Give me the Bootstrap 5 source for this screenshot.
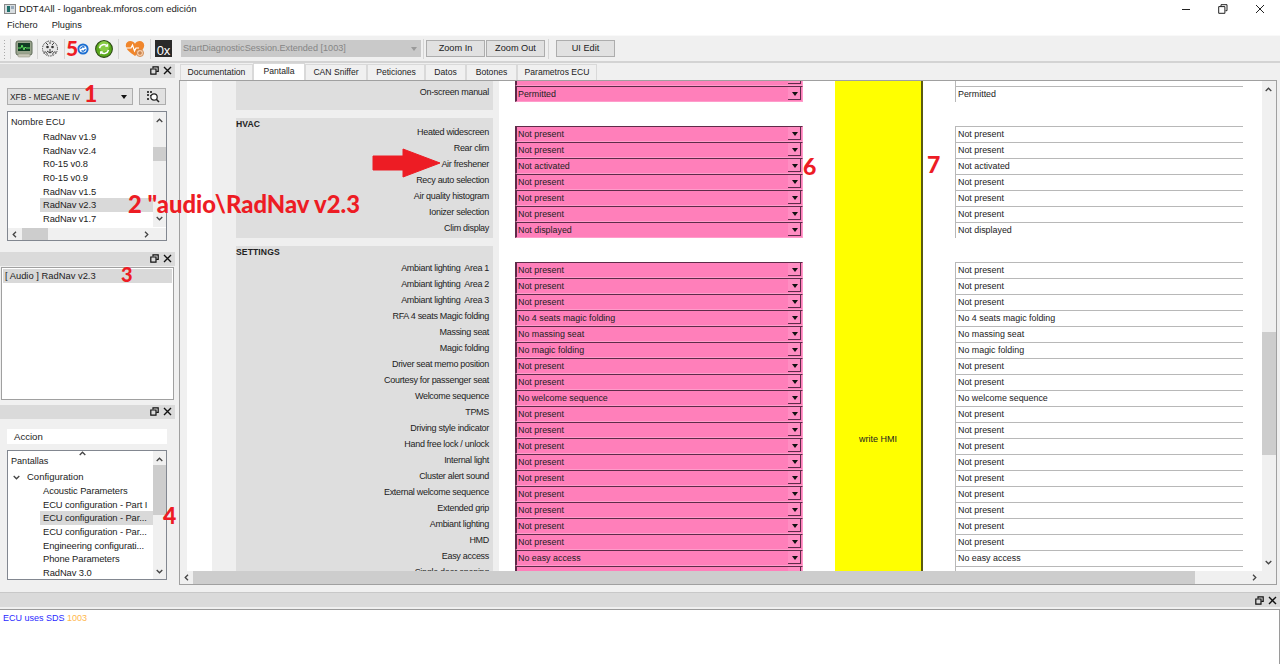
<!DOCTYPE html>
<html lang="es">
<head>
<meta charset="utf-8">
<title>DDT4All</title>
<link href="https://cdn.jsdelivr.net/npm/bootstrap@5.3.0/dist/css/bootstrap.min.css" rel="stylesheet">
<style>
html,body{height:664px;overflow:hidden}
body{font-family:"Liberation Sans",Arial,sans-serif;font-size:9.4px;color:#222;background:#f0f0f0;line-height:1.2;position:relative;width:1280px}
.win-title{height:18px;background:#fff;padding-left:4px;font-size:9.6px;gap:3px}
.win-ctl{margin-left:auto;gap:27px;padding-right:15px}
.win-ctl svg{display:block}
.win-menu{height:17px;background:#fff;padding:0 0 1px 7px;gap:14px;font-size:9.2px}
.tool-strip{height:28px;background:#f0f0f0;border-top:1px solid #f9f9f9;border-bottom:2px solid #d3d3d3;padding-left:3px}
.grip{width:3px;height:20px;margin-right:4px;background-image:radial-gradient(#aaa 40%,transparent 45%);background-size:3px 3px;flex:none}
.tsep{width:1px;height:20px;background:#d5d5d5;flex:none}
.ticon{width:18px;height:18px;flex:none;display:block}
.ti-mon{margin:0 4px}
.ti-skull{margin:0 5px 0 3px}
.ti-blue{margin-left:6px}
.ti-green{margin:0 5px 0 6px}
.ti-heart{width:20px;margin:0 5px 0 6px}
.sep-a{margin-right:4px}
.sep-b{margin:0 2px}
.sep-c{margin:0 7px 0 3px}
.t0x{width:17px;height:17px;background:#2a2a2a;color:#fff;font-size:13px;line-height:21px;text-align:center;flex:none;overflow:hidden}
.sess-combo{width:240px;height:17px;background:#c9c9c9;color:#858585;padding-left:2px;margin-left:9px;font-size:9.1px;line-height:17px;position:relative;flex:none}
.sess-combo::after{content:"";position:absolute;right:4px;top:7px;border:3px solid transparent;border-top:4px solid #9a9a9a}
.tool-btn.btn{--bs-btn-border-radius:0;width:59px;height:17px;padding:0;font-size:9.2px;line-height:15px;background:#e1e1e1;border:1px solid #adadad;color:#222;flex:none}
.btn-next{margin-left:1px}
.main-area{height:527px}
.left-docks{width:175px;flex:none;padding-top:1px}
.dock-title{height:14px;background:#dadada;gap:4px;padding:0 3px 2px 0}
.dock-title svg{display:block}
.dock-one{height:188px}
.dock-two{height:153px}
.dock-three{height:180px}
.ecu-combo{position:absolute;left:7px;top:24px;width:126px;height:17px;background:#e1e1e1;border:1px solid #adadad;padding-left:2px;line-height:16px;font-size:8.5px;letter-spacing:-.1px}
.ecu-combo::after{content:"";position:absolute;right:5px;top:6px;border:3px solid transparent;border-top:4px solid #111}
.scan-btn{position:absolute;left:139px;top:24px;width:27px;height:17px;background:#e1e1e1;border:1px solid #adadad;padding:0 0 0 6px}
.tree-frame{position:absolute;left:7px;width:160px;height:130px;background:#fff;border:1px solid #828790;overflow:hidden}
.frame-ecu{top:47px}
.frame-act{top:45px}
.tree-head{font-size:9.1px;padding-left:3px;height:14px;line-height:14px;margin-top:3px}
.tree-conf{padding-left:5px;gap:7px;margin-top:2px;font-size:9.5px}
.tree-rows{margin:0;padding:0;list-style:none}
.rows-ecu{margin-top:1px}
.rows-act li{letter-spacing:0}
.tree-rows li{height:13.65px;line-height:13.65px;padding-left:35px;width:145px;font-size:9.4px;letter-spacing:-.1px;white-space:nowrap;overflow:hidden}
.tree-rows li.on{background:#d9d9d9;margin-left:32px;padding-left:3px;width:113px}
.vbar{position:absolute;right:0;top:0;width:13px;background:#f0f0f0}
.vbar-ecu{height:115px}
.vbar-act{height:128px}
.vbar i{position:absolute;left:0;width:13px;background:#cdcdcd;display:block}
.th-ecu{top:35px;height:14px}
.th-act{top:14px;height:50px}
.hbar{position:absolute;left:0;bottom:0;height:12px;width:158px;background:#f0f0f0}
.hbar i{position:absolute;top:0;left:14px;width:26px;height:12px;background:#cdcdcd;display:block}
.sb-a{position:absolute;display:block;width:7px;height:5px}
.sb-h{width:5px;height:7px;top:3px}
.a-up{left:3px;top:6px}
.a-d1{left:3px;top:104px}
.a-d2{left:3px;top:118px}
.a-l{left:4px}
.a-r1{left:136px}
.a-r2{left:1072px}
.a-d3{left:3px;top:479px}
.a-tab{left:71px;top:0}
.open-list{position:absolute;left:1px;top:15px;width:173px;height:133px;background:#fff;border:1px solid #a0a0a0;padding:1px}
.open-list div{background:#d9d9d9;height:14px;line-height:14px;padding-left:2px;font-size:9.4px}
.act-tab{position:absolute;left:7px;top:24px;width:160px;height:15px;background:#fff;padding-left:7px;line-height:15px;font-size:9.6px}
.central{width:1098px;margin-left:4px;height:522px;flex:none}
.tabs-row.nav{height:17px;border:0;flex-wrap:nowrap;margin-left:1px;--bs-nav-link-padding-x:0;--bs-nav-link-padding-y:0}
.tabs-row .nav-link{height:17px;margin-top:1px;background:#f0f0f0;border:1px solid #d9d9d9;border-bottom:0;border-radius:0;color:#222;font-size:8.6px;line-height:15px;text-align:center;display:block}
.tabs-row .nav-link.active{background:#fff;height:18px;margin-top:0;border-color:#d9d9d9;color:#222}
.tw1{width:73px}.tw2{width:52px}.tw3{width:62px}.tw4{width:58px}.tw5{width:41px}.tw6{width:51px}.tw7{width:80px}
.tab-frame{height:505px;border:1px solid #a0a0a0;position:relative;background:#f0f0f0;overflow:hidden}
.view-port{position:absolute;left:0;top:0;width:1083px;height:490px;overflow:hidden;background:#f0f0f0}
.form-canvas{margin-top:-11px;margin-left:7px;width:1076px;background:#fff;height:520px;overflow:hidden;padding-left:25px}
.lab-col{width:287px;flex:none;background:#efefef;padding:0 6px 0 24px;height:520px}
.gray-blk{background:#dedede;margin-bottom:8px}
.blk-a{height:40px;padding-top:14px}
.blk-b{height:120px}
.blk-c{height:340px}
.blk-h{font-weight:700;font-size:8.6px;line-height:12px;height:12px;margin-bottom:-6px;letter-spacing:.1px}
.blk-c .blk-h{margin-bottom:2px}
.flab{height:16px;line-height:16px;text-align:right;padding-right:4px;font-size:9px;letter-spacing:-.3px;white-space:pre}
.cbo-col{width:288px;flex:none;margin-left:16px}
.cbo{height:16px;line-height:15px;background:#ff7fba;border:1px solid #ff9ccb;border-top-color:#5e2b49;border-left:2px solid #5e2b49;padding-left:1px;position:relative;font-size:8.9px;white-space:nowrap;overflow:hidden}
.cbo::after{content:"";position:absolute;right:1px;top:0;bottom:1px;width:13px;background:#ff8dc2;border-right:1px solid #5e2b49;border-bottom:1px solid #5e2b49}
.cbo::before{content:"";position:absolute;right:4px;top:5px;border:3px solid transparent;border-top:4px solid #111;z-index:1}
.yellow-col{width:88px;flex:none;margin-left:32px;height:738px;background:#ff0;border-right:2px solid #5b5b10;font-size:9px}
.val-col{width:288px;flex:none;margin-left:32px}
.vbx{height:16px;line-height:15px;border-top:1px solid #b8b8b8;border-left:1px solid #b8b8b8;padding-left:2px;font-size:8.9px;white-space:nowrap;overflow:hidden}
.rowgap{height:24px}
.vs-main{position:absolute;right:0;top:0;width:14px;height:490px;background:#f0f0f0}
.vs-main i{position:absolute;left:0;width:14px;top:251px;height:123px;background:#cdcdcd;display:block}
.hs-main{position:absolute;left:0;top:490px;height:13px;width:1083px;background:#f0f0f0}
.hs-main i{position:absolute;left:13px;width:1002px;top:0;height:13px;background:#cdcdcd;display:block}
.log-dock{position:absolute;left:0;top:592px;width:1280px;height:72px}
.log-bar{height:15px;background:#dadada;border-top:1px solid #c8c8c8;gap:4px;padding-right:3px}
.log-bar svg{display:block}
.log-body{height:55px;margin-top:2px;background:#fff;border-top:1px solid #9a9a9a;border-right:1px solid #9a9a9a;padding:3px;font-size:9px;color:#2a2aff}
.log-num{color:#ffb84d}
.red-note{position:absolute;color:#ed1c24;font-family:Lato,"Liberation Sans",sans-serif;font-weight:900;line-height:1;white-space:nowrap;font-size:23px}
.n1{left:84px;top:82px}
.n2{left:128px;top:193px;font-size:23.8px}
.n3{left:121px;top:264px;font-size:20px}
.n4{left:163px;top:504px}
.n5{left:66px;top:37px;font-size:21px}
.n6{left:803px;top:155px}
.n7{left:927px;top:153px}
.arrow-over{position:absolute;left:372px;top:148px;display:block}
</style>
</head>
<body>
<svg width="0" height="0" class="position-absolute">
<defs>
<symbol id="cu" viewBox="0 0 7 5"><path d="M.7 4 3.5 1.2 6.3 4" fill="none" stroke="#444" stroke-width="1.3"/></symbol>
<symbol id="cd" viewBox="0 0 7 5"><path d="M.7 1 3.5 3.8 6.3 1" fill="none" stroke="#444" stroke-width="1.3"/></symbol>
<symbol id="cl" viewBox="0 0 5 7"><path d="M4 .7 1.2 3.5 4 6.3" fill="none" stroke="#444" stroke-width="1.3"/></symbol>
<symbol id="cr" viewBox="0 0 5 7"><path d="M1 .7 3.8 3.5 1 6.3" fill="none" stroke="#444" stroke-width="1.3"/></symbol>
<symbol id="dfloat" viewBox="0 0 9 9"><path d="M3 2.500V.8h5.200v4.600H6.300" fill="none" stroke="#111" stroke-width="1.200"/><path d="M.8 3h5.200v5.200H.8z" fill="none" stroke="#111" stroke-width="1.200"/></symbol>
<symbol id="dclose" viewBox="0 0 9 9"><path d="M1 1l7 7M8 1 1 8" stroke="#111" stroke-width="1.400"/></symbol>
</defs>
</svg>

<header class="win-title d-flex align-items-center">
<svg width="12" height="10" viewBox="0 0 12 10"><rect x=".5" y=".5" width="11" height="9" fill="#d8dde0" stroke="#8a8a8a"/><rect x="3" y="2" width="3" height="6" fill="#1f6f6a"/><rect x="7" y="2" width="3" height="3" fill="#9ab"/></svg>
<span>DDT4All - loganbreak.mforos.com edición</span>
<div class="win-ctl d-flex align-items-center">
<svg width="10" height="10" viewBox="0 0 10 10"><path d="M1 5.500h8" stroke="#222"/></svg>
<svg width="10" height="10" viewBox="0 0 10 10"><path d="M3 2.500V.7h6v6H7.500" fill="none" stroke="#222"/><path d="M.7 2.600h6.200v6.700H.7z" fill="none" stroke="#222"/></svg>
<svg width="10" height="10" viewBox="0 0 10 10"><path d="M1 1l8 8M9 1 1 9" stroke="#222"/></svg>
</div>
</header>
<nav class="win-menu d-flex align-items-center"><span>Fichero</span><span>Plugins</span></nav>

<div class="tool-strip d-flex align-items-center">
<div class="grip"></div><div class="tsep"></div>
<svg class="ticon ti-mon" viewBox="0 0 18 18"><rect x="1" y="1" width="16" height="14" rx="2" fill="#9aa58e" stroke="#5f6a58"/><rect x="3" y="3" width="12" height="8" fill="#123d24"/><path d="M3 8h3l1-3 2 5 1-3 1 1h4" fill="none" stroke="#5fe05f"/><rect x="3" y="14" width="12" height="3" rx="1" fill="#c8c8b8" stroke="#8a8a7a" stroke-width=".5"/></svg>
<div class="tsep"></div>
<svg class="ticon ti-skull" viewBox="0 0 18 18"><circle cx="9" cy="8.500" r="7.500" fill="#e8e8e8" stroke="#444" stroke-dasharray="1.500 1"/><path d="M2.500 13c2-2 3-1 4 1.500M15.500 13c-2-2-3-1-4 1.500" fill="none" stroke="#333"/><circle cx="6.500" cy="7" r="1.300" fill="#333"/><circle cx="11.500" cy="7" r="1.300" fill="#333"/><path d="M6 11l3 2 3-2M9 9v4" fill="none" stroke="#333"/><path d="M5 3l2 2M13 3l-2 2M9 2v2" stroke="#444"/></svg>
<div class="tsep"></div>
<svg class="ticon ti-blue" viewBox="0 0 18 18"><circle cx="12" cy="9" r="4.600" fill="#fff" stroke="#1d6fd1" stroke-width="2"/><path d="M9.800 9a2.200 2.200 0 0 1 3.700-1.600M14.200 9a2.200 2.200 0 0 1-3.700 1.600" fill="none" stroke="#1d6fd1" stroke-width="1.300"/></svg>
<svg class="ticon ti-green" viewBox="0 0 20 20"><circle cx="10" cy="10" r="9.300" fill="#5aa81d" stroke="#2c4a16" stroke-width="1.200"/><circle cx="10" cy="7" r="6" fill="#9bdc55" opacity=".7"/><path d="M5 9a5 5 0 0 1 8.500-2.500M15 11a5 5 0 0 1-8.500 2.500" fill="none" stroke="#fff" stroke-width="1.800"/><path d="M14.500 3.800v3.600h-3.600zM5.500 16.200v-3.600h3.600z" fill="#fff"/></svg>
<div class="tsep"></div>
<svg class="ticon ti-heart" viewBox="0 0 20 18"><path d="M10 16C6 13 .8 9.800 .8 5.500 .8 2.700 3 1 5.300 1c2 0 3.700 1 4.700 2.700C11 2 12.700 1 14.700 1 17 1 19.200 2.700 19.200 5.500c0 4.300-5.200 7.500-9.200 10.500z" fill="#f0862c"/><path d="M1 8h5l1.500-3 2 6 1.500-3h3" fill="none" stroke="#fff" stroke-width="1.200"/><circle cx="15" cy="13" r="3.600" fill="#f6c9a4" stroke="#c87a3a" stroke-width=".7"/><path d="M13 13h4M15 11v4" stroke="#b5692d" stroke-width=".9"/></svg>
<div class="tsep sep-a"></div>
<div class="t0x">0x</div>
<div class="sess-combo">StartDiagnosticSession.Extended [1003]</div>
<div class="tsep sep-b"></div>
<button class="btn tool-btn" type="button">Zoom In</button>
<button class="btn tool-btn btn-next" type="button">Zoom Out</button>
<div class="tsep sep-c"></div>
<button class="btn tool-btn" type="button">UI Edit</button>
</div>

<div class="main-area d-flex">
<aside class="left-docks">
<section class="dock-one position-relative">
<div class="dock-title d-flex align-items-center justify-content-end"><svg width="9" height="9"><use href="#dfloat"/></svg><svg width="9" height="9"><use href="#dclose"/></svg></div>
<div class="ecu-combo">XFB - MEGANE IV</div>
<button class="scan-btn" type="button" aria-label="Buscar"><svg class="d-block" width="14" height="13" viewBox="0 0 14 13"><path d="M1 1h2v2H1zM4 1h2v2H4zM1 4h2v2H1zM4 5h1v1H4zM1 8h2v2H1z" fill="#444"/><circle cx="8" cy="7" r="3.200" fill="#fff" stroke="#222" stroke-width="1.200"/><path d="M10.300 9.300 13 12" stroke="#222" stroke-width="1.600"/></svg></button>
<div class="tree-frame frame-ecu">
<div class="tree-head">Nombre ECU</div>
<ul class="tree-rows rows-ecu">
<li>RadNav v1.9</li><li>RadNav v2.4</li><li>R0-15 v0.8</li><li>R0-15 v0.9</li><li>RadNav v1.5</li><li class="on">RadNav v2.3</li><li>RadNav v1.7</li>
</ul>
<div class="vbar vbar-ecu"><i class="th-ecu"></i>
<svg class="sb-a a-up"><use href="#cu"/></svg><svg class="sb-a a-d1"><use href="#cd"/></svg></div>
<div class="hbar"><i></i>
<svg class="sb-a sb-h a-l"><use href="#cl"/></svg><svg class="sb-a sb-h a-r1"><use href="#cr"/></svg></div>
</div>
</section>
<section class="dock-two position-relative">
<div class="dock-title d-flex align-items-center justify-content-end"><svg width="9" height="9"><use href="#dfloat"/></svg><svg width="9" height="9"><use href="#dclose"/></svg></div>
<div class="open-list"><div>[ Audio ] RadNav v2.3</div></div>
</section>
<section class="dock-three position-relative">
<div class="dock-title d-flex align-items-center justify-content-end"><svg width="9" height="9"><use href="#dfloat"/></svg><svg width="9" height="9"><use href="#dclose"/></svg></div>
<div class="act-tab">Accion</div>
<div class="tree-frame frame-act">
<div class="tree-head">Pantallas</div>
<div class="tree-head tree-conf d-flex align-items-center"><svg width="7" height="5"><use href="#cd"/></svg><span>Configuration</span></div>
<ul class="tree-rows rows-act">
<li>Acoustic Parameters</li><li>ECU configuration - Part I</li><li class="on">ECU configuration - Par...</li><li>ECU configuration - Par...</li><li>Engineering configurati...</li><li>Phone Parameters</li><li>RadNav 3.0</li>
</ul>
<svg class="sb-a a-tab"><use href="#cu"/></svg>
<div class="vbar vbar-act"><i class="th-act"></i>
<svg class="sb-a a-up"><use href="#cu"/></svg><svg class="sb-a a-d2"><use href="#cd"/></svg></div>
</div>
</section>
</aside>

<main class="central">
<ul class="nav nav-tabs tabs-row">
<li class="nav-item"><a class="nav-link tw1" href="#">Documentation</a></li>
<li class="nav-item"><a class="nav-link active tw2" href="#">Pantalla</a></li>
<li class="nav-item"><a class="nav-link tw3" href="#">CAN Sniffer</a></li>
<li class="nav-item"><a class="nav-link tw4" href="#">Peticiones</a></li>
<li class="nav-item"><a class="nav-link tw5" href="#">Datos</a></li>
<li class="nav-item"><a class="nav-link tw6" href="#">Botones</a></li>
<li class="nav-item"><a class="nav-link tw7" href="#">Parametros ECU</a></li>
</ul>
<div class="tab-frame">
<div class="view-port">
<div class="form-canvas d-flex align-items-start">
<div class="lab-col">
<div class="gray-blk blk-a"><div class="flab">On-screen manual</div></div>
<div class="gray-blk blk-b"><div class="blk-h">HVAC</div>
<div class="flab">Heated widescreen</div><div class="flab">Rear clim</div><div class="flab">Air freshener</div><div class="flab">Recy auto selection</div><div class="flab">Air quality histogram</div><div class="flab">Ionizer selection</div><div class="flab">Clim display</div></div>
<div class="gray-blk blk-c"><div class="blk-h">SETTINGS</div>
<div class="flab">Ambiant lighting  Area 1</div><div class="flab">Ambiant lighting  Area 2</div><div class="flab">Ambiant lighting  Area 3</div><div class="flab">RFA 4 seats Magic folding</div><div class="flab">Massing seat</div><div class="flab">Magic folding</div><div class="flab">Driver seat memo position</div><div class="flab">Courtesy for passenger seat</div><div class="flab">Welcome sequence</div><div class="flab">TPMS</div><div class="flab">Driving style indicator</div><div class="flab">Hand free lock / unlock</div><div class="flab">Internal light</div><div class="flab">Cluster alert sound</div><div class="flab">External welcome sequence</div><div class="flab">Extended grip</div><div class="flab">Ambiant lighting</div><div class="flab">HMD</div><div class="flab">Easy access</div><div class="flab">Single door opening</div></div>
</div>
<div class="cbo-col">
<div class="cbo">Permitted</div><div class="cbo">Permitted</div><div class="rowgap"></div>
<div class="cbo">Not present</div><div class="cbo">Not present</div><div class="cbo">Not activated</div><div class="cbo">Not present</div><div class="cbo">Not present</div><div class="cbo">Not present</div><div class="cbo">Not displayed</div><div class="rowgap"></div>
<div class="cbo">Not present</div><div class="cbo">Not present</div><div class="cbo">Not present</div><div class="cbo">No 4 seats magic folding</div><div class="cbo">No massing seat</div><div class="cbo">No magic folding</div><div class="cbo">Not present</div><div class="cbo">Not present</div><div class="cbo">No welcome sequence</div><div class="cbo">Not present</div><div class="cbo">Not present</div><div class="cbo">Not present</div><div class="cbo">Not present</div><div class="cbo">Not present</div><div class="cbo">Not present</div><div class="cbo">Not present</div><div class="cbo">Not present</div><div class="cbo">Not present</div><div class="cbo">No easy access</div><div class="cbo">Not present</div>
</div>
<div class="yellow-col d-flex align-items-center justify-content-center">write HMI</div>
<div class="val-col">
<div class="vbx">Permitted</div><div class="vbx">Permitted</div><div class="rowgap"></div>
<div class="vbx">Not present</div><div class="vbx">Not present</div><div class="vbx">Not activated</div><div class="vbx">Not present</div><div class="vbx">Not present</div><div class="vbx">Not present</div><div class="vbx">Not displayed</div><div class="rowgap"></div>
<div class="vbx">Not present</div><div class="vbx">Not present</div><div class="vbx">Not present</div><div class="vbx">No 4 seats magic folding</div><div class="vbx">No massing seat</div><div class="vbx">No magic folding</div><div class="vbx">Not present</div><div class="vbx">Not present</div><div class="vbx">No welcome sequence</div><div class="vbx">Not present</div><div class="vbx">Not present</div><div class="vbx">Not present</div><div class="vbx">Not present</div><div class="vbx">Not present</div><div class="vbx">Not present</div><div class="vbx">Not present</div><div class="vbx">Not present</div><div class="vbx">Not present</div><div class="vbx">No easy access</div><div class="vbx">Not present</div>
</div>
</div>
</div>
<div class="vs-main"><i></i><svg class="sb-a a-up"><use href="#cu"/></svg><svg class="sb-a a-d3"><use href="#cd"/></svg></div>
<div class="hs-main"><i></i><svg class="sb-a sb-h a-l"><use href="#cl"/></svg><svg class="sb-a sb-h a-r2"><use href="#cr"/></svg></div>
</div>
</main>
</div>

<section class="log-dock">
<div class="log-bar d-flex align-items-center justify-content-end"><svg width="9" height="9"><use href="#dfloat"/></svg><svg width="9" height="9"><use href="#dclose"/></svg></div>
<div class="log-body">ECU uses SDS <span class="log-num">1003</span></div>
</section>

<svg class="arrow-over" width="69" height="30" viewBox="0 0 69 30"><path d="M1 8h30V1l37 14-37 14v-7H1z" fill="#ed1c24" stroke="#ed1c24" stroke-linejoin="round"/></svg>
<span class="red-note n5">5</span>
<span class="red-note n1">1</span>
<span class="red-note n2">2 "audio\RadNav v2.3</span>
<span class="red-note n3">3</span>
<span class="red-note n4">4</span>
<span class="red-note n6">6</span>
<span class="red-note n7">7</span>
<script src="https://cdn.jsdelivr.net/npm/bootstrap@5.3.0/dist/js/bootstrap.bundle.min.js"></script>
</body>
</html>
